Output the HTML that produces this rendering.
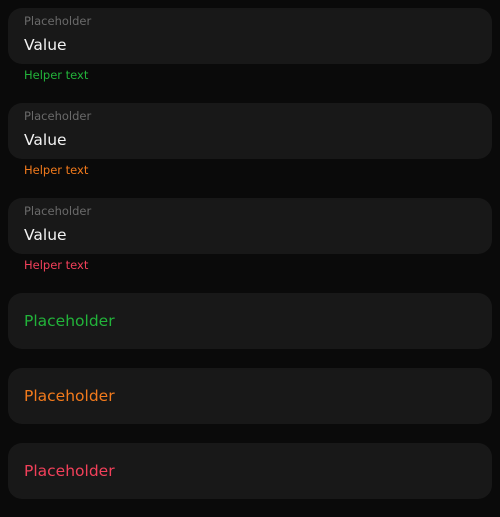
<!DOCTYPE html>
<html><head><style>
body{margin:0;background:#0a0a0a;width:500px;height:517px;font-family:"DejaVu Sans",sans-serif;position:relative;overflow:hidden}
.b{position:absolute;left:8px;width:484px;height:56px;background:#181818;border-radius:14px}
.l{position:absolute;left:16px;top:6px;font-size:11.5px;color:#6a6a6a}
.v{position:absolute;left:16px;top:28px;font-size:15.5px;color:#f2f2f2}
.p{position:absolute;left:16px;top:19px;font-size:15.5px}
.h{position:absolute;left:24px;font-size:11.5px}
.g{color:#22b33a}.o{color:#f27a1c}.r{color:#f2405a}
</style></head><body>
<div class="b" style="top:8px"><div class="l">Placeholder</div><div class="v">Value</div></div>
<div class="h g" style="top:68px">Helper text</div>
<div class="b" style="top:103px"><div class="l">Placeholder</div><div class="v">Value</div></div>
<div class="h o" style="top:163px">Helper text</div>
<div class="b" style="top:198px"><div class="l">Placeholder</div><div class="v">Value</div></div>
<div class="h r" style="top:258px">Helper text</div>
<div class="b" style="top:293px"><div class="p g">Placeholder</div></div>
<div class="b" style="top:368px"><div class="p o">Placeholder</div></div>
<div class="b" style="top:443px"><div class="p r">Placeholder</div></div>
</body></html>
